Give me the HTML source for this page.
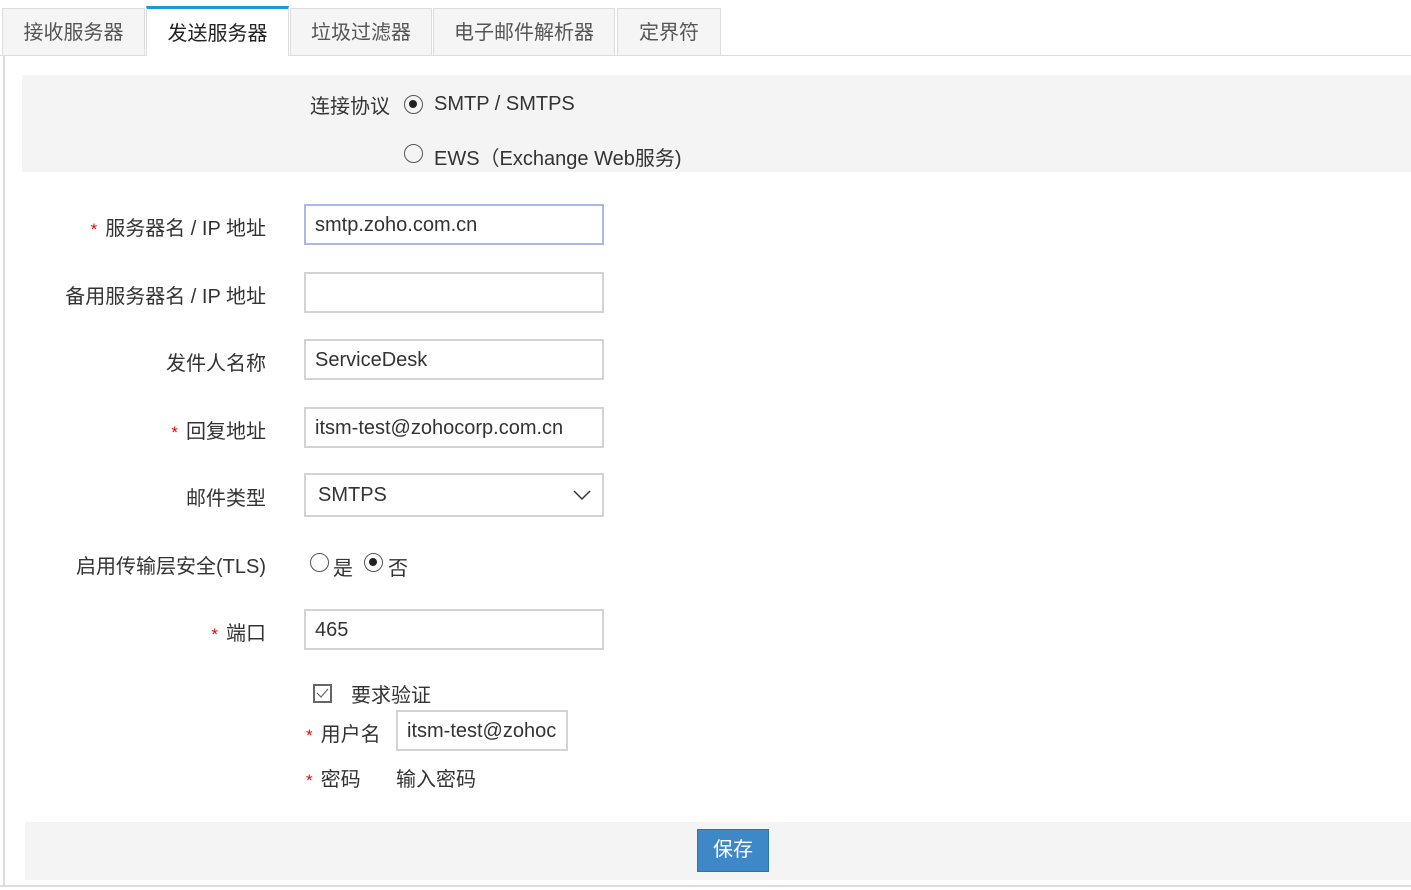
<!DOCTYPE html>
<html><head><meta charset="utf-8"><style>
body{margin:0;width:1411px;height:890px;background:#fff;position:relative;overflow:hidden;font-family:"Liberation Sans","Noto Sans CJK SC",sans-serif;font-size:20px;color:#333}
.a{position:absolute}
.tab{position:absolute;top:8px;height:47px;background:#f5f5f5;border:1px solid #ddd;border-bottom:none;box-sizing:border-box;text-align:center;line-height:48px;font-size:20px;color:#555}
.tab.act{background:#fff;border-top:3px solid #1a9ad6;top:6px;height:50px;color:#222;line-height:50px}
.lbl{position:absolute;right:1145px;text-align:right;white-space:nowrap;color:#333}
.st{color:#e00;font-size:17px;margin-right:8px;position:relative;top:0px}
.in{position:absolute;left:304px;width:300px;height:41px;border:2px solid #d3d3d3;box-sizing:border-box;padding-left:9px;line-height:38px;color:#333}
.rad{position:absolute;width:19px;height:19px;border:1.5px solid #555;border-radius:50%;box-sizing:border-box}
.rad.on::after{content:"";position:absolute;left:4px;top:4px;width:8px;height:8px;border-radius:50%;background:#222}
</style></head><body>
<div class="a" style="left:0;top:55px;width:1411px;height:1px;background:#ddd"></div>
<div class="tab" style="left:2px;width:143px">接收服务器</div>
<div class="tab act" style="left:146px;width:143px">发送服务器</div>
<div class="tab" style="left:290px;width:142px">垃圾过滤器</div>
<div class="tab" style="left:433px;width:182px">电子邮件解析器</div>
<div class="tab" style="left:617px;width:104px">定界符</div>
<div class="a" style="left:3px;top:56px;width:2px;height:830px;background:#ddd"></div>
<div class="a" style="left:22px;top:75px;width:1389px;height:97px;background:#f4f4f4"></div>
<div class="a" style="left:310px;top:90px">连接协议</div>
<span class="rad on" style="left:404px;top:95px"></span><div class="a" style="left:434px;top:93px">SMTP / SMTPS</div>
<span class="rad" style="left:404px;top:144px"></span><div class="a" style="left:434px;top:142px">EWS（Exchange Web服务)</div>

<div class="lbl" style="top:212px"><span class="st">*</span>服务器名 / IP 地址</div>
<div class="in" style="top:204px;border-color:#a8b8e8">smtp.zoho.com.cn</div>
<div class="lbl" style="top:280px">备用服务器名 / IP 地址</div>
<div class="in" style="top:272px"></div>
<div class="lbl" style="top:347px">发件人名称</div>
<div class="in" style="top:339px">ServiceDesk</div>
<div class="lbl" style="top:415px"><span class="st">*</span>回复地址</div>
<div class="in" style="top:407px">itsm-test@zohocorp.com.cn</div>
<div class="lbl" style="top:482px">邮件类型</div>
<div class="in" style="top:473px;height:44px;line-height:41px;padding-left:12px">SMTPS
<svg class="a" style="right:10px;top:14px" width="20" height="12" viewBox="0 0 20 12"><path d="M2 2 L10 10 L18 2" fill="none" stroke="#333" stroke-width="1.5"/></svg></div>
<div class="lbl" style="top:550px">启用传输层安全(TLS)</div>
<span class="rad" style="left:310px;top:553px"></span><div class="a" style="left:333px;top:552px">是</div>
<span class="rad on" style="left:364px;top:553px"></span><div class="a" style="left:388px;top:552px">否</div>
<div class="lbl" style="top:617px"><span class="st">*</span>端口</div>
<div class="in" style="top:609px">465</div>
<div class="a" style="left:313px;top:684px;width:19px;height:19px;border:2px solid #666;box-sizing:border-box"><svg width="15" height="15" viewBox="0 0 15 15" style="position:absolute;left:0;top:0"><path d="M2 7 L6 11 L13 3" fill="none" stroke="#666" stroke-width="1.2"/></svg></div>
<div class="a" style="left:351px;top:679px">要求验证</div>
<div class="a" style="left:306px;top:718px"><span class="st">*</span>用户名</div>
<div class="a" style="left:396px;top:710px;width:172px;height:41px;border:2px solid #d3d3d3;box-sizing:border-box;padding-left:9px;line-height:38px;overflow:hidden;white-space:nowrap">itsm-test@zohoc</div>
<div class="a" style="left:306px;top:763px"><span class="st">*</span>密码</div>
<div class="a" style="left:396px;top:763px">输入密码</div>
<div class="a" style="left:25px;top:822px;width:1386px;height:58px;background:#f4f4f4"></div>
<div class="a" style="left:697px;top:829px;width:72px;height:43px;background:#3f88c8;border:1px solid #2f74b2;box-sizing:border-box;color:#fff;text-align:center;line-height:41px;font-size:20px">保存</div>
<div class="a" style="left:0;top:885px;width:1411px;height:2px;background:#ddd"></div>
</body></html>
